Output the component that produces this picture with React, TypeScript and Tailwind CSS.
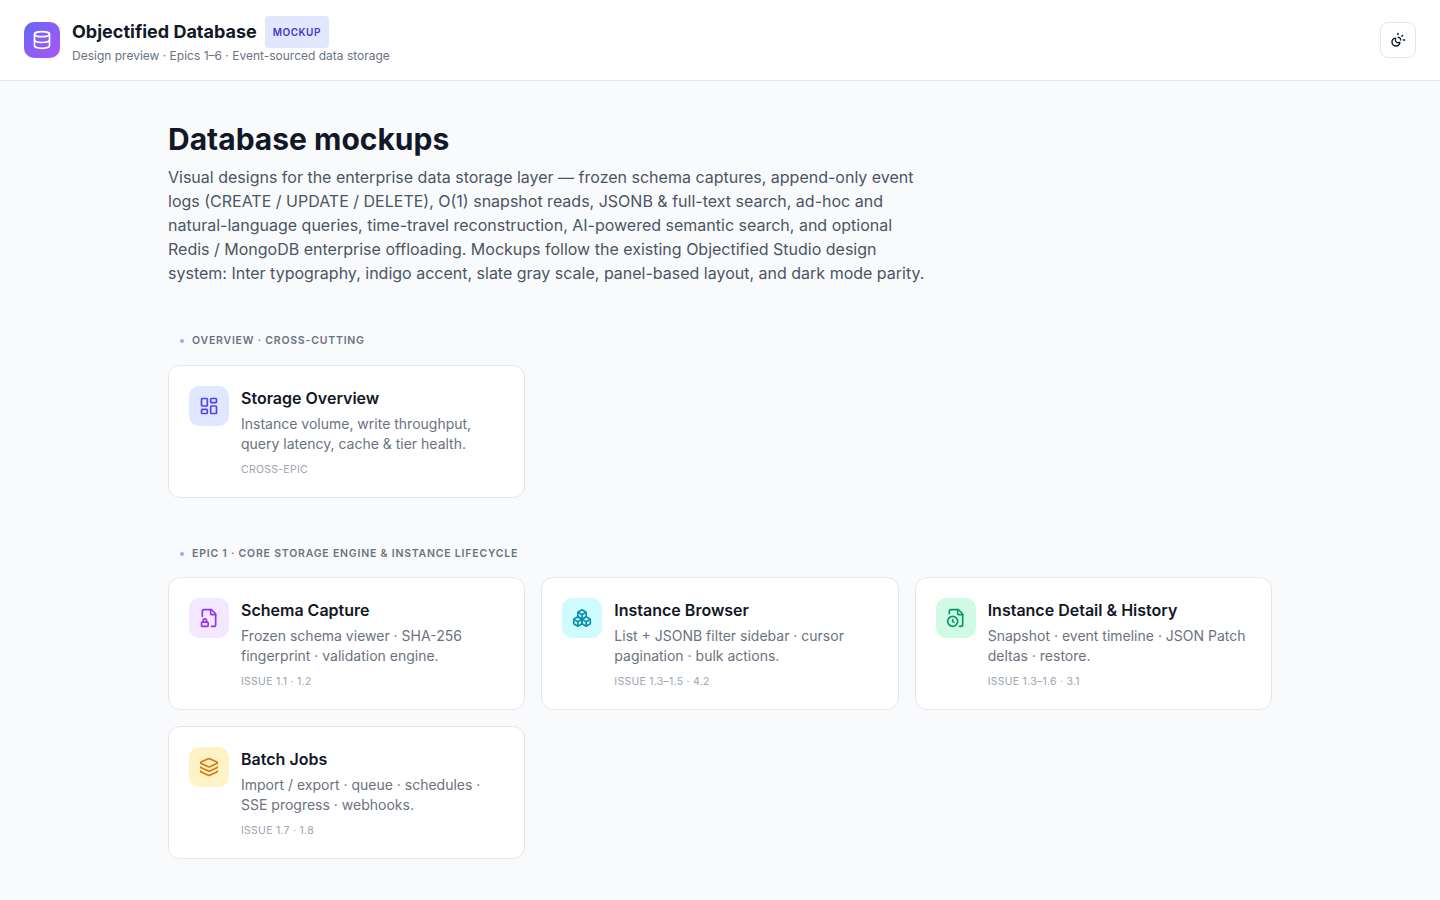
import { Boxes, Database, FileClock, FileLock2, Layers, LayoutDashboard, SunMoon, type LucideIcon } from "lucide-react";

type Mockup = {
  title: string;
  desc: string;
  issue: string;
  icon: LucideIcon;
  tile: string;
  stroke: string;
};

const overview: Mockup[] = [
  {
    title: "Storage Overview",
    desc: "Instance volume, write throughput, query latency, cache & tier health.",
    issue: "Cross-epic",
    icon: LayoutDashboard,
    tile: "bg-[#e0e7ff]",
    stroke: "text-[#4f46e5]",
  },
];

const epicOne: Mockup[] = [
  {
    title: "Schema Capture",
    desc: "Frozen schema viewer · SHA-256 fingerprint · validation engine.",
    issue: "Issue 1.1 · 1.2",
    icon: FileLock2,
    tile: "bg-[#f3e8ff]",
    stroke: "text-[#9333ea]",
  },
  {
    title: "Instance Browser",
    desc: "List + JSONB filter sidebar · cursor pagination · bulk actions.",
    issue: "Issue 1.3–1.5 · 4.2",
    icon: Boxes,
    tile: "bg-[#cffafe]",
    stroke: "text-[#0891b2]",
  },
  {
    title: "Instance Detail & History",
    desc: "Snapshot · event timeline · JSON Patch deltas · restore.",
    issue: "Issue 1.3–1.6 · 3.1",
    icon: FileClock,
    tile: "bg-[#d1fae5]",
    stroke: "text-[#059669]",
  },
  {
    title: "Batch Jobs",
    desc: "Import / export · queue · schedules · SSE progress · webhooks.",
    issue: "Issue 1.7 · 1.8",
    icon: Layers,
    tile: "bg-[#fef3c7]",
    stroke: "text-[#d97706]",
  },
];

function Card({ item }: { item: Mockup }) {
  const Icon = item.icon;
  return (
    <div className="flex gap-3 rounded-xl border border-[#e5e7eb] bg-white p-5">
      <div className={`flex h-10 w-10 shrink-0 items-center justify-center rounded-[10px] ${item.tile}`}>
        <Icon className={`h-5 w-5 ${item.stroke}`} strokeWidth={2} />
      </div>
      <div className="min-w-0">
        <h3 className="text-base leading-6 font-semibold text-[#111827]">{item.title}</h3>
        <p className="mt-1 text-sm leading-5 text-[#6b7280]">{item.desc}</p>
        <p className="mt-2 text-[10.5px] leading-[15px] tracking-[0.025em] text-[#9ca3af] uppercase">{item.issue}</p>
      </div>
    </div>
  );
}

function Section({ label, items }: { label: string; items: Mockup[] }) {
  return (
    <section className="group mt-12 first:mt-0">
      <div className="mb-[15px] flex h-4 items-center gap-2 pl-3 text-[10.5px] font-semibold tracking-[0.075em] text-[#6b7280] uppercase group-first:mb-4">
        <span className="h-1 w-1 rounded-full bg-[#a5a8f5]" />
        {label}
      </div>
      <div className="grid grid-cols-3 gap-4">
        {items.map((item) => (
          <Card key={item.title} item={item} />
        ))}
      </div>
    </section>
  );
}

export default function App() {
  return (
    <div className="min-h-screen bg-[#f9fafb] font-['Inter',sans-serif]">
      <header className="flex h-[81px] items-center justify-between border-b border-[#e5e7eb] bg-white px-6">
        <div className="flex items-center gap-3">
          <div className="flex h-9 w-9 items-center justify-center rounded-[10px] bg-gradient-to-br from-[#6366f1] to-[#a855f7]">
            <Database className="h-5 w-5 text-white" strokeWidth={2} />
          </div>
          <div>
            <div className="flex items-center gap-2">
              <h1 className="text-lg leading-7 font-bold text-[#111827]">Objectified Database</h1>
              <span className="rounded bg-[#e0e7ff] px-2 py-2 text-[10px] leading-4 font-semibold tracking-[0.05em] text-[#4338ca] uppercase">
                Mockup
              </span>
            </div>
            <p className="text-xs leading-4 text-[#6b7280]">Design preview · Epics 1–6 · Event-sourced data storage</p>
          </div>
        </div>
        <button className="flex h-9 w-9 items-center justify-center rounded-lg border border-[#e5e7eb] bg-white text-[#111827]">
          <SunMoon className="h-4 w-4" strokeWidth={2} />
        </button>
      </header>

      <main className="mx-auto max-w-[1200px] px-12 py-10">
        <h2 className="text-3xl leading-9 font-bold text-[#111827]">Database mockups</h2>
        <p className="mt-2 max-w-[768px] text-base leading-6 text-[#4b5563]">
          Visual designs for the enterprise data storage layer — frozen schema captures, append-only event logs (CREATE / UPDATE / DELETE), O(1) snapshot reads, JSONB &amp; full-text search, ad-hoc and natural-language queries, time-travel reconstruction, AI-powered semantic search, and optional Redis / MongoDB enterprise offloading. Mockups follow the existing Objectified Studio design system: Inter typography, indigo accent, slate gray scale, panel-based layout, and dark mode parity.
        </p>
        <div className="mt-12">
          <Section label="Overview · Cross-cutting" items={overview} />
          <Section label="Epic 1 · Core storage engine & instance lifecycle" items={epicOne} />
        </div>
      </main>
    </div>
  );
}
